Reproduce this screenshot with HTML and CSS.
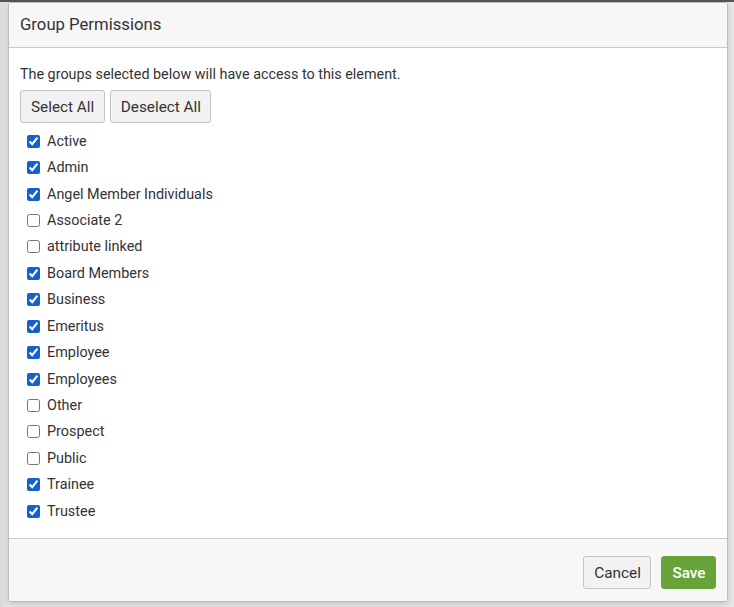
FILE: index.html
```html
<!DOCTYPE html>
<html>
<head>
<meta charset="utf-8">
<link rel="stylesheet" href="styles.css">
</head>
<body>
<div class="backdrop">
  <div class="modal">
    <div class="modal-header">Group Permissions</div>
    <div class="modal-body">
      <p class="intro">The groups selected below will have access to this element.</p>
      <div class="btn-row">
        <button class="btn">Select All</button>
        <button class="btn">Deselect All</button>
      </div>
      <ul class="groups">
        <li><label><input type="checkbox" checked> Active</label></li>
        <li><label><input type="checkbox" checked> Admin</label></li>
        <li><label><input type="checkbox" checked> Angel Member Individuals</label></li>
        <li><label><input type="checkbox"> Associate 2</label></li>
        <li><label><input type="checkbox"> attribute linked</label></li>
        <li><label><input type="checkbox" checked> Board Members</label></li>
        <li><label><input type="checkbox" checked> Business</label></li>
        <li><label><input type="checkbox" checked> Emeritus</label></li>
        <li><label><input type="checkbox" checked> Employee</label></li>
        <li><label><input type="checkbox" checked> Employees</label></li>
        <li><label><input type="checkbox"> Other</label></li>
        <li><label><input type="checkbox"> Prospect</label></li>
        <li><label><input type="checkbox"> Public</label></li>
        <li><label><input type="checkbox" checked> Trainee</label></li>
        <li><label><input type="checkbox" checked> Trustee</label></li>
      </ul>
    </div>
    <div class="modal-footer">
      <button class="btn">Cancel</button>
      <button class="btn btn-save">Save</button>
    </div>
  </div>
</div>
</body>
</html>
```

FILE: styles.css
```css
html, body {
  margin: 0;
  padding: 0;
}
body {
  font-family: Roboto, "Liberation Sans", sans-serif;
  color: #333;
  background: #e4e4e4;
}
.backdrop {
  height: 607px;
  box-sizing: border-box;
  border-top: 2px solid #555;
  padding-left: 8px;
  background: linear-gradient(to right, #d9d9d9 0px, #e6e6e6 8px, #e6e6e6 100%);
}
.modal {
  width: 720px;
  height: 600px;
  box-sizing: border-box;
  background: #fff;
  border: 1px solid #bdbdbd;
  border-radius: 3px;
  box-shadow: 0 2px 6px rgba(0,0,0,0.15);
  display: flex;
  flex-direction: column;
  overflow: hidden;
}
.modal-header {
  height: 45px;
  box-sizing: border-box;
  background: #f7f7f7;
  border-bottom: 1px solid #c8c8c8;
  padding: 0 11px;
  font-size: 16.7px;
  line-height: 44px;
  color: #333;
}
.modal-body {
  flex: 1;
  padding: 17px 11px 0;
}
.intro {
  margin: 0;
  font-size: 14.35px;
  line-height: 20px;
}
.btn-row {
  display: flex;
  gap: 5px;
  margin-top: 5px;
}
.btn {
  font-family: Roboto, "Liberation Sans", sans-serif;
  font-size: 15.3px;
  height: 33px;
  padding: 0 9.5px 0 10px;
  background: #f2f2f2;
  border: 1px solid #c4c4c4;
  border-radius: 3px;
  color: #333;
  cursor: pointer;
}
.groups {
  list-style: none;
  margin: 5px 0 0;
  padding: 0;
}
.groups li {
  height: 26.43px;
  display: flex;
  align-items: center;
}
.groups label {
  display: flex;
  align-items: center;
  font-size: 14.4px;
  color: #333;
}
.groups input {
  width: 13px;
  height: 13px;
  margin: 0 7px 0 7px;
  accent-color: #1560cc;
}
.modal-footer {
  height: 63px;
  box-sizing: border-box;
  background: #f7f7f7;
  border-top: 1px solid #c8c8c8;
  display: flex;
  justify-content: flex-end;
  align-items: flex-start;
  gap: 10px;
  padding: 17px 11px 0;
}
.btn-save {
  background: #68a33a;
  border-color: #68a33a;
  color: #fff;
  font-weight: 500;
}
```
